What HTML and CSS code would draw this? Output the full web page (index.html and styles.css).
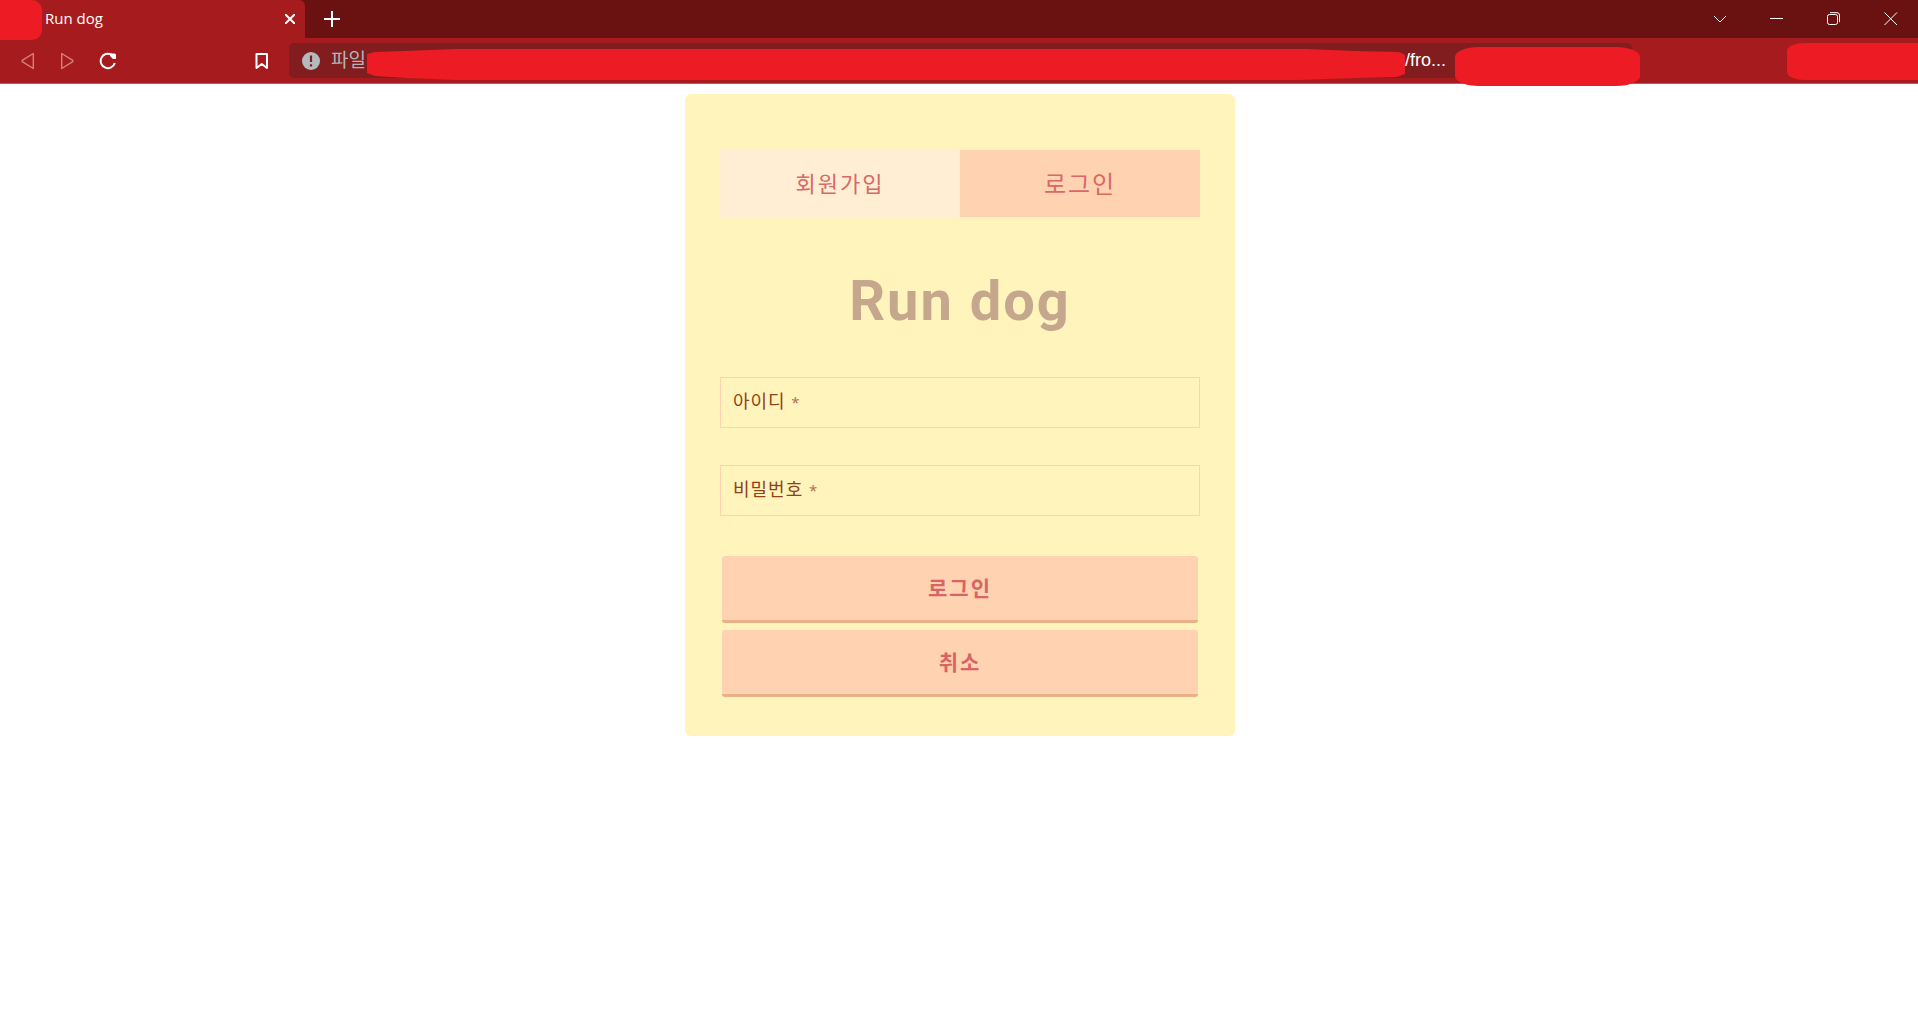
FILE: index.html
```html
<!DOCTYPE html>
<html lang="ko">
<head>
<meta charset="utf-8">
<meta name="viewport" content="width=device-width, initial-scale=1">
<title>Run dog</title>
<link rel="stylesheet" href="styles.css">
</head>
<body>
<header class="browser">
  <div class="titlebar">
    <div class="browser-tab">
      <span class="tab-cover"></span>
      <span class="tab-title">Run dog</span>
      <button class="icon-btn" type="button" aria-label="탭 닫기"><svg width="10" height="10" viewBox="0 0 10 10"><path d="M0 0l10 10M10 0L0 10" stroke-width="2"/></svg></button>
    </div>
    <button class="icon-btn new-tab" type="button" aria-label="새 탭"><svg width="16" height="16" viewBox="0 0 16 16"><path d="M8 0v16M0 8h16" stroke-width="2"/></svg></button>
    <div class="window-controls">
      <button class="icon-btn" type="button" aria-label="탭 검색"><svg width="14" height="14" viewBox="0 0 14 14"><path d="M1 4l6 6 6-6"/></svg></button>
      <button class="icon-btn" type="button" aria-label="최소화"><svg width="14" height="14" viewBox="0 0 14 14"><path d="M0 6.500h13"/></svg></button>
      <button class="icon-btn" type="button" aria-label="이전 크기로"><svg width="14" height="14" viewBox="0 0 14 14"><rect x=".5" y="2.500" width="10" height="10" rx="2"/><path d="M3 .7h7a2.500 2.500 0 0 1 2.500 2.500v7"/></svg></button>
      <button class="icon-btn" type="button" aria-label="닫기"><svg width="14" height="14" viewBox="0 0 14 14"><path d="M.5 .5l12.500 12.500M13 .5L.5 13"/></svg></button>
    </div>
  </div>
  <div class="toolbar">
    <nav class="history">
      <button class="icon-btn dim" type="button" aria-label="뒤로"><svg width="14" height="18" viewBox="0 0 14 18"><path d="M12.300 1.500v15L1.200 9.600v-1.200z" stroke-width="1.400" stroke-linejoin="round"/></svg></button>
      <button class="icon-btn dim" type="button" aria-label="앞으로"><svg width="14" height="18" viewBox="0 0 14 18"><path d="M1.700 1.500v15l11.100-6.900v-1.200z" stroke-width="1.400" stroke-linejoin="round"/></svg></button>
      <button class="icon-btn" type="button" aria-label="새로고침"><svg width="18" height="18" viewBox="0 0 18 18"><path d="M15.800 11A7.200 7.200 0 1 1 12.500 2.700" stroke-width="2"/><path d="M11 1.500h4.500a1.500 1.500 0 0 1 1.500 1.500v4h-3l-3-3z" class="solid"/></svg></button>
    </nav>
    <button class="icon-btn bookmark" type="button" aria-label="북마크"><svg width="14" height="18" viewBox="0 0 14 18"><path d="M1.500 2h10.500v14l-5.200-4-5.300 4z" stroke-width="2" stroke-linejoin="round"/></svg></button>
    <div class="address">
      <svg class="info" width="18" height="18" viewBox="0 0 18 18"><circle cx="9" cy="9" r="9"/><path d="M9 3.500v6.500M9 12.300v2.200" stroke-width="2.200"/></svg>
      <span class="scheme">파일</span>
      <svg class="path-cover" viewBox="0 0 1040 32" preserveAspectRatio="none"><path d="M0 5l8-2 30-1 52-2h850l50 2 44 1 6 3v19l-8 3-40 1-60 2H90l-50-2-32-2-8-3z"/></svg>
      <span class="path">/fro...</span>
    </div>
    <span class="cover cover-middle"></span>
    <span class="cover cover-end"></span>
  </div>
</header>
<main class="page">
  <form class="card">
    <nav class="tabs">
      <a class="tab" href="#signup">회원가입</a>
      <a class="tab active" href="#login">로그인</a>
    </nav>
    <h1 class="title">Run dog</h1>
    <div class="field">
      <input class="input" id="user-id" type="text">
      <label class="label" for="user-id">아이디 <span class="required">*</span></label>
    </div>
    <div class="field">
      <input class="input" id="password" type="password">
      <label class="label" for="password">비밀번호 <span class="required">*</span></label>
    </div>
    <div class="actions">
      <button class="button" type="button">로그인</button>
      <button class="button" type="button">취소</button>
    </div>
  </form>
</main>
</body>
</html>
```
FILE: styles.css
```css
* {
  box-sizing: border-box;
}

body {
  margin: 0;
  background: #fff;
  font-family: "Open Sans", "Noto Sans CJK KR", sans-serif;
}

button {
  font-family: inherit;
  border: 0;
  cursor: pointer;
}

svg {
  display: block;
  fill: none;
  stroke: currentColor;
}

.solid {
  fill: currentColor;
  stroke: none;
}

.icon-btn {
  display: flex;
  padding: 0;
  background: none;
  color: #fff;
}

.dim {
  color: #d67f7f;
}

/* Browser frame */
.titlebar {
  position: relative;
  z-index: 1;
  display: flex;
  align-items: center;
  height: 38px;
  background: #6a1212;
}

.browser-tab {
  display: flex;
  align-items: center;
  width: 305px;
  height: 38px;
  padding-right: 10px;
  background: #a61c1e;
  border-top-right-radius: 6px;
  color: #fff;
  font-size: 15px;
  line-height: 20px;
}

.tab-cover {
  align-self: flex-start;
  width: 42px;
  height: 40px;
  margin-right: 3px;
  background: #ed1c24;
  border-radius: 0 10px 10px 0;
}

.tab-title {
  flex: 1;
  padding-bottom: 2px;
}

.new-tab {
  margin-left: 19px;
}

.window-controls {
  display: flex;
  gap: 43px;
  margin-left: auto;
  padding-right: 20px;
}

.toolbar {
  position: relative;
  display: flex;
  align-items: center;
  height: 46px;
  padding-left: 21px;
  background: #a61c1e;
  border-bottom: 1px solid #c05a58;
}

.history {
  display: flex;
  gap: 25px;
}

.bookmark {
  margin-left: 138px;
}

.address {
  display: flex;
  flex: 1;
  align-items: center;
  height: 35px;
  margin: 0 286px 0 20px;
  padding: 0 186px 0 13px;
  background: #811d1f;
  border-radius: 5px;
  color: #fff;
  font-size: 18px;
}

.info {
  margin-right: 11px;
  fill: #b4b9bd;
  stroke: none;
}

.info path {
  stroke: #811d1f;
}

.scheme {
  padding: 0 1px 2px 0;
  color: #b4b4b8;
  font-size: 19px;
  line-height: 24px;
}

.path-cover {
  flex: 1;
  align-self: flex-end;
  min-width: 0;
  height: 32px;
  margin-bottom: -3px;
  fill: #ed1c24;
  stroke: none;
}

.path {
  font-family: "Liberation Sans", sans-serif;
}

.cover {
  position: absolute;
  background: #ed1c24;
}

.cover-middle {
  top: 9px;
  right: 278px;
  width: 185px;
  height: 39px;
  border-radius: 24px / 10px;
}

.cover-end {
  top: 5px;
  right: 0;
  width: 131px;
  height: 37px;
  border-radius: 18px 0 0 18px / 8px 0 0 8px;
}

/* Login card */
.page {
  padding: 10px 10px 10px 12px;
}

.card {
  max-width: 550px;
  margin: 0 auto;
  padding: 56px 35px 39px;
  background: #fff4bc;
  border-radius: 6px;
}

.tabs {
  display: grid;
  grid-template-columns: 1fr 1fr;
}

.tab {
  display: flex;
  align-items: center;
  justify-content: center;
  height: 67px;
  padding-bottom: 2px;
  background: #ffeed4;
  color: #d96868;
  font-size: 22px;
  line-height: 32px;
  letter-spacing: 2px;
  text-decoration: none;
}

.tab.active {
  padding-bottom: 0;
  background: #ffd3b2;
  font-size: 24px;
}

.title {
  margin: 48px 0 40px;
  color: #c4a78c;
  font-family: Roboto, "Noto Sans CJK KR", sans-serif;
  font-size: 56px;
  line-height: 72px;
  letter-spacing: 2px;
  text-align: center;
}

.field {
  position: relative;
  margin-bottom: 37px;
}

.input {
  display: block;
  width: 100%;
  height: 51px;
  padding: 0 12px;
  background: transparent;
  border: 1px solid #ffd3b2;
  border-radius: 0;
  color: #8f4217;
  font-size: 18px;
}

.label {
  position: absolute;
  top: 10px;
  left: 13px;
  color: #8f4217;
  font-size: 18px;
  line-height: 28px;
  letter-spacing: 1px;
}

.required {
  color: #b66a50;
  font-size: 15px;
}

.actions {
  display: grid;
  gap: 8px;
  padding: 3px 2px 0;
}

.button {
  height: 67px;
  padding: 0 0 2px;
  background: #ffd3b2;
  border-bottom: 3px solid #ebb085;
  border-radius: 3px;
  color: #d96464;
  font-size: 21px;
  font-weight: 700;
  letter-spacing: 2px;
}

.actions {
  gap: 7px;
}
```
